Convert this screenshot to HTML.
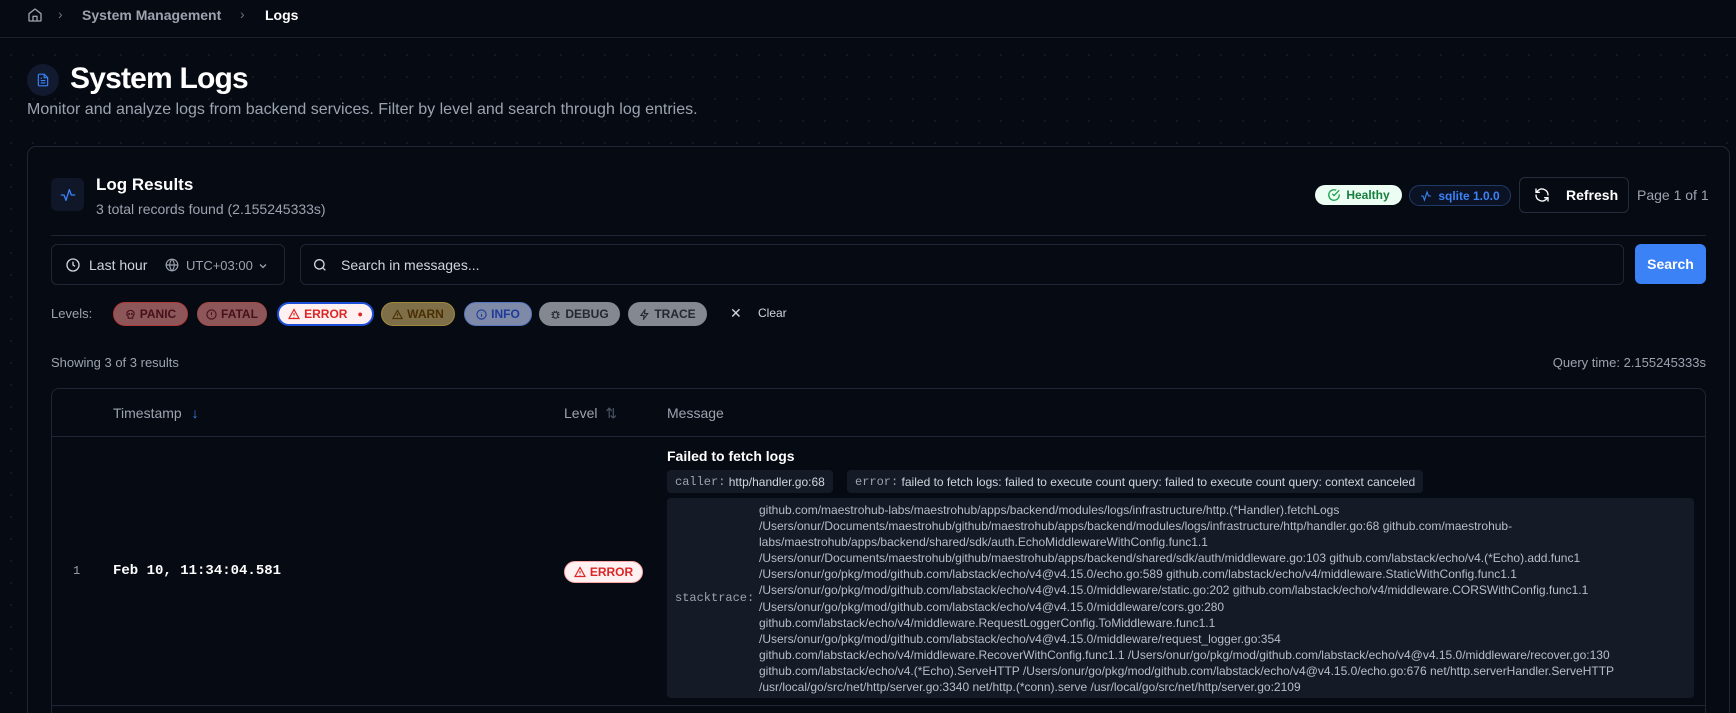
<!DOCTYPE html>
<html><head><meta charset="utf-8"><style>
*{box-sizing:border-box;margin:0;padding:0}
html{width:1736px;height:713px;overflow:hidden}
body{width:1736px;height:713px;overflow:hidden;background:#060a13;font-family:"Liberation Sans",sans-serif;color:#e5e7eb;position:relative;
background-image:radial-gradient(rgba(255,255,255,0.06) 1px,transparent 1.2px);background-size:22px 22px}
.abs{position:absolute}
.mono{font-family:"Liberation Mono",monospace}
.bc{top:0;left:0;width:1736px;height:38px;border-bottom:1px solid #1a202c;background:#060a13}
.chip{position:absolute;top:302px;height:24px;border-radius:12px;font-size:12px;font-weight:700;display:flex;align-items:center;justify-content:center;gap:4px}
svg{display:block}
</style></head><body>
<div class="abs bc">
 <svg class="abs" style="left:27px;top:7px" width="16" height="16" viewBox="0 0 24 24" fill="none" stroke="#9ca3af" stroke-width="2" stroke-linecap="round" stroke-linejoin="round"><path d="M3 10l9-7 9 7v10a1 1 0 0 1-1 1H4a1 1 0 0 1-1-1z"/><path d="M9 21v-7h6v7"/></svg>
 <span class="abs" style="left:58px;top:6px;color:#6b7280;font-size:14px">›</span>
 <span class="abs" style="left:82px;top:7px;color:#9ca3af;font-size:14px;font-weight:700">System Management</span>
 <span class="abs" style="left:240px;top:6px;color:#6b7280;font-size:14px">›</span>
 <span class="abs" style="left:265px;top:7px;color:#fff;font-size:14px;font-weight:700">Logs</span>
</div>
<div class="abs" style="left:27px;top:64px;width:32px;height:32px;border-radius:50%;background:#111a2e;display:flex;align-items:center;justify-content:center">
 <svg width="14" height="16" viewBox="0 0 24 24" fill="none" stroke="#3b82f6" stroke-width="2"><path d="M14 2H6a2 2 0 0 0-2 2v16a2 2 0 0 0 2 2h12a2 2 0 0 0 2-2V8z"/><path d="M14 2v6h6M8 13h8M8 17h8M8 9h2"/></svg>
</div>
<div class="abs" style="left:70px;top:62px;font-size:30px;font-weight:700;color:#fff;letter-spacing:-0.8px">System Logs</div>
<div class="abs" style="left:27px;top:101px;font-size:16px;color:#9ca3af">Monitor and analyze logs from backend services. Filter by level and search through log entries.</div>

<div class="abs" style="left:27px;top:146px;width:1703px;height:567px;border:1px solid #1e2636;border-bottom:none;border-radius:9px 9px 0 0;background:#060a13"></div>
<div class="abs" style="left:51px;top:178px;width:33px;height:33px;border-radius:6px;background:#0f1729;display:flex;align-items:center;justify-content:center">
 <svg width="16" height="16" viewBox="0 0 24 24" fill="none" stroke="#3b82f6" stroke-width="2" stroke-linecap="round" stroke-linejoin="round"><path d="M2 12h4l3 8 5-16 3 8h5"/></svg>
</div>
<div class="abs" style="left:96px;top:175px;font-size:17px;font-weight:700;color:#fff">Log Results</div>
<div class="abs" style="left:96px;top:201px;font-size:14px;color:#9ca3af">3 total records found (2.155245333s)</div>

<div class="abs" style="left:1315px;top:185px;width:87px;height:20px;border-radius:10px;background:#ecfdf3;color:#15803d;font-size:12px;font-weight:700;display:flex;align-items:center;justify-content:center;gap:5px">
 <svg width="14" height="14" viewBox="0 0 24 24" fill="none" stroke="#16a34a" stroke-width="2.2"><path d="M21 11v1a9 9 0 1 1-5.3-8.2"/><path d="M21 4L12 13l-3-3"/></svg>Healthy</div>
<div class="abs" style="left:1409px;top:185px;width:102px;height:21px;border-radius:11px;border:1px solid #1e3a66;background:#0a1224;color:#3b82f6;font-size:12px;font-weight:700;display:flex;align-items:center;justify-content:center;gap:6px">
 <svg width="12" height="12" viewBox="0 0 24 24" fill="none" stroke="#3b82f6" stroke-width="2.2"><path d="M2 12h4l3 8 5-16 3 8h5"/></svg>sqlite 1.0.0</div>
<div class="abs" style="left:1519px;top:177px;width:110px;height:36px;border-radius:6px;border:1px solid #252d3c;display:flex;align-items:center;font-size:14px;font-weight:700;color:#fff">
 <svg style="margin-left:14px;margin-right:16px" width="16" height="16" viewBox="0 0 24 24" fill="none" stroke="#fff" stroke-width="2" stroke-linecap="round"><path d="M21 12a9 9 0 0 0-15.5-6.2L3 8M3 3v5h5M3 12a9 9 0 0 0 15.5 6.2L21 16M21 21v-5h-5"/></svg>Refresh</div>
<div class="abs" style="left:1637px;top:187px;font-size:14px;color:#9ca3af">Page 1 of 1</div>

<div class="abs" style="left:51px;top:235px;width:1655px;height:1px;background:#1e2636"></div>

<div class="abs" style="left:51px;top:244px;width:234px;height:41px;border:1px solid #1e2636;border-radius:6px;font-size:14px;color:#d1d5db">
 <svg class="abs" style="left:13px;top:12px" width="16" height="16" viewBox="0 0 24 24" fill="none" stroke="#d1d5db" stroke-width="2"><circle cx="12" cy="12" r="9"/><path d="M12 7v5l3 2"/></svg>
 <span class="abs" style="left:37px;top:12px">Last hour</span>
 <svg class="abs" style="left:113px;top:13px" width="14" height="14" viewBox="0 0 24 24" fill="none" stroke="#9ca3af" stroke-width="2"><circle cx="12" cy="12" r="10"/><path d="M2 12h20M12 2a15 15 0 0 1 0 20M12 2a15 15 0 0 0 0 20"/></svg>
 <span class="abs" style="left:134px;top:13px;font-size:13px;color:#9ca3af">UTC+03:00</span>
 <svg class="abs" style="left:205px;top:15px" width="12" height="12" viewBox="0 0 24 24" fill="none" stroke="#9ca3af" stroke-width="2.5"><path d="M6 9l6 6 6-6"/></svg>
</div>
<div class="abs" style="left:300px;top:244px;width:1324px;height:41px;border:1px solid #1e2636;border-radius:6px">
 <svg class="abs" style="left:11px;top:12px" width="16" height="16" viewBox="0 0 24 24" fill="none" stroke="#d1d5db" stroke-width="2"><circle cx="11" cy="11" r="7"/><path d="M20 20l-4-4"/></svg>
 <span class="abs" style="left:40px;top:12px;font-size:14px;color:#d1d5db">Search in messages...</span>
</div>
<div class="abs" style="left:1635px;top:244px;width:71px;height:40px;border-radius:6px;background:#3b82f6;color:#fff;font-size:14px;font-weight:700;display:flex;align-items:center;justify-content:center">Search</div>

<div class="abs" style="left:51px;top:306px;font-size:13px;color:#9ca3af">Levels:</div>
<div class="chip" style="left:113px;width:75px;background:#8d5659;border:1px solid #b33a3a;color:#45111a">
 <svg width="11" height="11" viewBox="0 0 24 24" fill="none" stroke="#45111a" stroke-width="2.4"><path d="M12 3a8 8 0 0 0-8 8c0 3 2 4 3 5v4h10v-4c1-1 3-2 3-5a8 8 0 0 0-8-8z"/><circle cx="9" cy="11" r="1"/><circle cx="15" cy="11" r="1"/></svg>PANIC</div>
<div class="chip" style="left:197px;width:70px;background:#8d5659;border:1px solid #a44a4a;color:#45111a">
 <svg width="11" height="11" viewBox="0 0 24 24" fill="none" stroke="#45111a" stroke-width="2.4"><circle cx="12" cy="12" r="10"/><path d="M12 7v6M12 16v1"/></svg>FATAL</div>
<div class="chip" style="left:277px;width:97px;background:#fff1f1;border:2px solid #1d4ed8;color:#dc2626">
 <svg width="12" height="12" viewBox="0 0 24 24" fill="none" stroke="#dc2626" stroke-width="2.4"><path d="M12 3L2 21h20z"/><path d="M12 10v5M12 18v1"/></svg>ERROR <span style="font-size:9px;margin-left:6px">●</span></div>
<div class="chip" style="left:381px;width:74px;background:#7e6f48;border:1px solid #a08a3a;color:#4a2f06">
 <svg width="11" height="11" viewBox="0 0 24 24" fill="none" stroke="#4a2f06" stroke-width="2.4"><path d="M12 3L2 21h20z"/><path d="M12 10v5M12 18v1"/></svg>WARN</div>
<div class="chip" style="left:464px;width:68px;background:#7e8aa8;border:1px solid #5a78c0;color:#1e3a9a">
 <svg width="11" height="11" viewBox="0 0 24 24" fill="none" stroke="#1e3a9a" stroke-width="2.4"><circle cx="12" cy="12" r="10"/><path d="M12 11v6M12 7v1"/></svg>INFO</div>
<div class="chip" style="left:539px;width:81px;background:#838891;color:#24282f">
 <svg width="11" height="11" viewBox="0 0 24 24" fill="none" stroke="#24282f" stroke-width="2.4"><rect x="7" y="7" width="10" height="13" rx="5"/><path d="M3 12h4M17 12h4M4 7l3 2M20 7l-3 2M4 19l3-2M20 19l-3-2M9 4l1 3M15 4l-1 3"/></svg>DEBUG</div>
<div class="chip" style="left:628px;width:79px;background:#838891;color:#24282f">
 <svg width="11" height="11" viewBox="0 0 24 24" fill="none" stroke="#24282f" stroke-width="2.4"><path d="M13 2L4 14h7l-1 8 9-12h-7z"/></svg>TRACE</div>
<div class="abs" style="left:730px;top:305px;font-size:14px;color:#d1d5db">✕</div>
<div class="abs" style="left:758px;top:306px;font-size:12px;color:#d1d5db">Clear</div>

<div class="abs" style="left:51px;top:355px;font-size:13px;color:#9ca3af">Showing 3 of 3 results</div>
<div class="abs" style="right:30px;top:355px;font-size:13px;color:#9ca3af;text-align:right">Query time: 2.155245333s</div>

<div class="abs" style="left:51px;top:388px;width:1655px;height:325px;border:1px solid #1e2636;border-bottom:none;border-radius:8px 8px 0 0"></div>
<div class="abs" style="left:52px;top:436px;width:1653px;height:1px;background:#1e2636"></div>
<div class="abs" style="left:113px;top:405px;font-size:14px;color:#9ca3af">Timestamp <span style="color:#3b82f6;margin-left:6px">↓</span></div>
<div class="abs" style="left:564px;top:405px;font-size:14px;color:#9ca3af">Level <span style="color:#4b5563;margin-left:4px">⇅</span></div>
<div class="abs" style="left:667px;top:405px;font-size:14px;color:#9ca3af">Message</div>
<div class="abs" style="left:52px;top:705px;width:1653px;height:1px;background:#1e2636"></div>

<div class="abs mono" style="left:73px;top:564px;font-size:12px;color:#9ca3af">1</div>
<div class="abs mono" style="left:113px;top:563px;font-size:14px;font-weight:700;color:#fff">Feb 10, 11:34:04.581</div>
<div class="abs" style="left:564px;top:561px;width:79px;height:22px;border-radius:11px;background:#fff1f1;border:1px solid #fca5a5;color:#dc2626;font-size:12px;font-weight:700;display:flex;align-items:center;justify-content:center;gap:4px">
 <svg width="12" height="12" viewBox="0 0 24 24" fill="none" stroke="#dc2626" stroke-width="2.4"><path d="M12 3L2 21h20z"/><path d="M12 10v5M12 18v1"/></svg>ERROR</div>

<div class="abs" style="left:667px;top:448px;font-size:14px;font-weight:700;color:#fff">Failed to fetch logs</div>
<div class="abs" style="left:667px;top:470px;height:23px;padding:0 8px;border-radius:4px;background:#141b27;font-size:12px;color:#d1d5db;display:flex;align-items:center"><span class="mono" style="color:#9ca3af">caller:</span>&nbsp;http/handler.go:68</div>
<div class="abs" style="left:847px;top:470px;height:23px;padding:0 8px;border-radius:4px;background:#141b27;font-size:12px;color:#d1d5db;display:flex;align-items:center"><span class="mono" style="color:#9ca3af">error:</span>&nbsp;failed to fetch logs: failed to execute count query: failed to execute count query: context canceled</div>
<div class="abs" style="left:667px;top:498px;width:1027px;height:200px;border-radius:4px;background:#141b27"></div>
<div class="abs mono" style="left:675px;top:591px;font-size:12px;color:#9ca3af">stacktrace:</div>
<div class="abs" style="left:759px;top:502px;width:925px;font-size:12px;line-height:16.1px;color:#b8bec8">github.com/maestrohub-labs/maestrohub/apps/backend/modules/logs/infrastructure/http.(*Handler).fetchLogs<br>/Users/onur/Documents/maestrohub/github/maestrohub/apps/backend/modules/logs/infrastructure/http/handler.go:68 github.com/maestrohub-<br>labs/maestrohub/apps/backend/shared/sdk/auth.EchoMiddlewareWithConfig.func1.1<br>/Users/onur/Documents/maestrohub/github/maestrohub/apps/backend/shared/sdk/auth/middleware.go:103 github.com/labstack/echo/v4.(*Echo).add.func1<br>/Users/onur/go/pkg/mod/github.com/labstack/echo/v4@v4.15.0/echo.go:589 github.com/labstack/echo/v4/middleware.StaticWithConfig.func1.1<br>/Users/onur/go/pkg/mod/github.com/labstack/echo/v4@v4.15.0/middleware/static.go:202 github.com/labstack/echo/v4/middleware.CORSWithConfig.func1.1<br>/Users/onur/go/pkg/mod/github.com/labstack/echo/v4@v4.15.0/middleware/cors.go:280<br>github.com/labstack/echo/v4/middleware.RequestLoggerConfig.ToMiddleware.func1.1<br>/Users/onur/go/pkg/mod/github.com/labstack/echo/v4@v4.15.0/middleware/request_logger.go:354<br>github.com/labstack/echo/v4/middleware.RecoverWithConfig.func1.1 /Users/onur/go/pkg/mod/github.com/labstack/echo/v4@v4.15.0/middleware/recover.go:130<br>github.com/labstack/echo/v4.(*Echo).ServeHTTP /Users/onur/go/pkg/mod/github.com/labstack/echo/v4@v4.15.0/echo.go:676 net/http.serverHandler.ServeHTTP<br>/usr/local/go/src/net/http/server.go:3340 net/http.(*conn).serve /usr/local/go/src/net/http/server.go:2109</div>
</body></html>
